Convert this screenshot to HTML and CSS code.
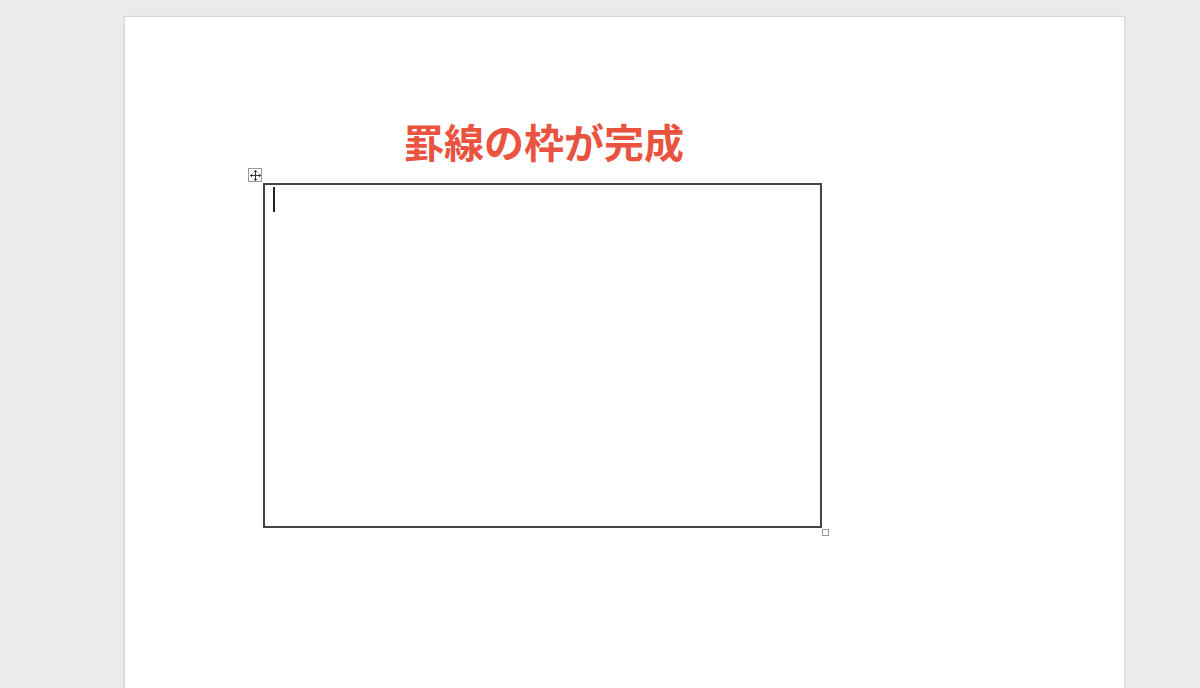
FILE: index.html
```html
<!DOCTYPE html>
<html lang="ja">
<head>
<meta charset="utf-8">
<link rel="stylesheet" href="styles.css">
</head>
<body>
<div class="page">
  <h1 class="title">罫線の枠が完成</h1>
  <div class="table-wrap">
    <div class="move-handle">
      <svg width="11" height="11" viewBox="0 0 11 11">
        <path d="M5.5 0.5 L5.5 10.5 M0.5 5.5 L10.5 5.5 M3.8 2.2 L5.5 0.5 L7.2 2.2 M3.8 8.8 L5.5 10.5 L7.2 8.8 M2.2 3.8 L0.5 5.5 L2.2 7.2 M8.8 3.8 L10.5 5.5 L8.8 7.2" fill="none" stroke="#333" stroke-width="1"/>
      </svg>
    </div>
    <div class="table-box"><span class="caret"></span></div>
    <div class="resize-handle"></div>
  </div>
</div>
</body>
</html>
```
FILE: styles.css
```css
html, body {
  margin: 0;
  padding: 0;
  background: #ebebeb;
  height: 688px;
  overflow: hidden;
}
.page {
  margin: 16px 0 0 124px;
  width: 1001px;
  height: 700px;
  background: #fff;
  border: 1px solid #d6d6d6;
  box-shadow: 0 0 2px rgba(0,0,0,0.06);
  box-sizing: border-box;
  padding-top: 99px;
}
.title {
  margin: 0 0 0 279px;
  font-family: "Noto Sans CJK JP", "Noto Sans", sans-serif;
  font-weight: 600;
  font-size: 40px;
  line-height: 50px;
  color: #e9533f;
  letter-spacing: 0px;
}
.table-wrap {
  position: relative;
  margin: 17px 0 0 138px;
  width: 559px;
  height: 345px;
}
.table-box {
  width: 559px;
  height: 345px;
  border: 2px solid #444;
  box-sizing: border-box;
}
.caret {
  display: block;
  width: 1.5px;
  height: 25px;
  background: #222;
  margin: 2px 0 0 8px;
}
.move-handle {
  position: absolute;
  left: -15px;
  top: -15px;
  width: 14px;
  height: 14px;
  border: 1px solid #999;
  background: #fff;
  box-sizing: border-box;
  display: flex;
  align-items: center;
  justify-content: center;
}
.move-handle svg { display: block; }
.resize-handle {
  position: absolute;
  left: 559px;
  top: 346px;
  width: 7px;
  height: 7px;
  border: 1px solid #999;
  background: #fff;
  box-sizing: border-box;
}
```
